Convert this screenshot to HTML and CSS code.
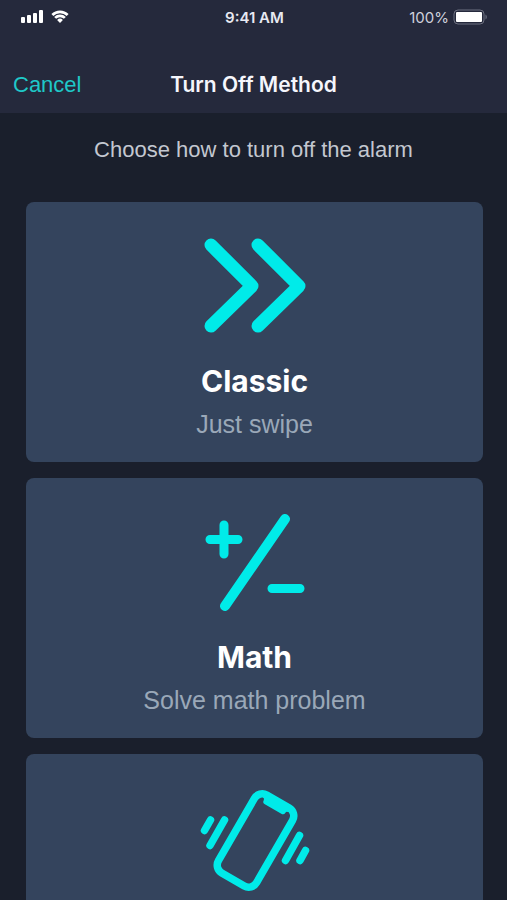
FILE: index.html
```html
<!DOCTYPE html>
<html lang="en">
  <head>
    <meta charset="UTF-8" />
    <meta name="viewport" content="width=device-width, initial-scale=1.0" />
    <title>Turn Off Method</title>
    <link rel="stylesheet" href="styles.css">
  </head>
  <body>
    <div class="screen">
      <header class="header">
        <div class="status">
          <div class="status-left">
            <svg class="signal" width="22" height="14" viewBox="0 0 22 14" aria-hidden="true">
              <rect x="0" y="7" width="4" height="6" rx="1" />
              <rect x="6" y="5" width="4" height="8" rx="1" />
              <rect x="12" y="3" width="4" height="10" rx="1" />
              <rect x="18" y="0" width="4" height="13" rx="1" />
            </svg>
            <svg class="wifi" width="18" height="14" viewBox="0 0 20 14" aria-hidden="true">
              <path d="M1.5 4.8a12 12 0 0 1 17 0M4.6 8a7.6 7.6 0 0 1 10.8 0" />
              <path class="wifi-dot" d="M6.8 10.3a4.6 4.6 0 0 1 6.4 0L10 13.6z" />
            </svg>
          </div>
          <span class="time">9:41 AM</span>
          <div class="status-right">
            <span>100%</span>
            <svg width="35" height="16" viewBox="0 0 35 16" aria-hidden="true">
              <rect class="battery-case" x="1" y="1" width="30" height="14" rx="4" />
              <rect class="battery-level" x="3" y="3" width="26" height="10" rx="1" />
              <path class="battery-tip" d="M32.5 5.5a3 3 0 0 1 0 5z" />
            </svg>
          </div>
        </div>
        <nav class="navbar">
          <a class="cancel" href="#">Cancel</a>
          <h1>Turn Off Method</h1>
        </nav>
      </header>

      <main class="content">
        <p class="hint">Choose how to turn off the alarm</p>

        <div class="methods">
          <button class="method" type="button">
            <svg class="icon" viewBox="0 0 110 104" stroke-width="13" aria-hidden="true">
              <path d="M11 11l41 41-41 40M58 11l41 41-41 40" />
            </svg>
            <span class="method-name">Classic</span>
            <span class="method-text">Just swipe</span>
          </button>

          <button class="method" type="button">
            <svg class="icon" viewBox="0 0 110 104" stroke-width="9" aria-hidden="true">
              <path d="M10 29.5h28M24 15v29M72 78.5h28" />
              <path d="M85 9L25 96" stroke-width="10" />
            </svg>
            <span class="method-name">Math</span>
            <span class="method-text">Solve math problem</span>
          </button>

          <button class="method" type="button" aria-label="Shake">
            <svg class="icon" viewBox="0 0 110 104" stroke-width="7.5" aria-hidden="true">
              <g transform="translate(55.5 54.5) rotate(30)">
                <rect x="-22" y="-45" width="44" height="90" rx="9" />
                <path class="notch" d="M-15-44h29v3q-2 0-2 2 0 3-3 3h-19q-3 0-3-3 0-2-2-2z" />
              </g>
              <path d="M24.5 34L10 59.5M10.5 34L4.5 44.5M99.5 49.500L85.5 74.5M105.5 64.5L100 74.5" />
            </svg>
          </button>
        </div>
      </main>
    </div>
  </body>
</html>
```

FILE: styles.css
```css
* {
  margin: 0;
  padding: 0;
  box-sizing: border-box;
}

body {
  background-color: #1a1f2c;
  font-family: "Liberation Sans", Arial, sans-serif;
  color: #fff;
}

.screen {
  height: 100vh;
  overflow: hidden;
}

.header {
  background-color: #25293c;
}

.status {
  display: grid;
  grid-template-columns: 1fr auto 1fr;
  align-items: center;
  height: 34px;
  padding: 0 19px 0 21px;
  font-family: Inter, sans-serif;
  font-size: 15px;
  color: #e8e9f2;
}

.status-left,
.status-right {
  display: flex;
  align-items: center;
  gap: 8px;
}

.status-right {
  justify-content: flex-end;
  gap: 4px;
  color: #cfd1dc;
}

.time {
  font-weight: 600;
}

.signal {
  fill: #fff;
}

.wifi {
  fill: none;
  stroke: #fff;
  stroke-width: 3;
}

.wifi-dot {
  fill: #fff;
  stroke: none;
}

.battery-case {
  fill: none;
  stroke: #6d7080;
}

.battery-level {
  fill: #fff;
}

.battery-tip {
  fill: #6d7080;
}

.navbar {
  display: grid;
  grid-template-columns: 1fr auto 1fr;
  align-items: baseline;
  height: 79px;
  padding: 37px 13px 0;
}

.cancel {
  font-size: 22px;
  line-height: 28px;
  color: #1fc8c8;
  text-decoration: none;
}

h1 {
  font-family: Inter, sans-serif;
  font-size: 21px;
  line-height: 28px;
  font-weight: 600;
  color: #f5f6fc;
}

.hint {
  padding: 23px 0 38px;
  font-size: 22px;
  line-height: 28px;
  text-align: center;
  color: #c3c7d0;
}

.methods {
  display: flex;
  flex-direction: column;
  gap: 16px;
  padding: 0 24px 0 26px;
}

.method {
  display: flex;
  flex-direction: column;
  align-items: center;
  flex-shrink: 0;
  min-height: 260px;
  padding: 32px 16px 20px;
  border: 0;
  border-radius: 8px;
  background-color: #34445d;
  font-family: inherit;
  color: #fff;
  cursor: pointer;
}

.icon {
  width: 110px;
  height: 104px;
  overflow: visible;
  fill: none;
  stroke: #00ebe9;
  stroke-linecap: round;
  stroke-linejoin: round;
}

.notch {
  fill: #00ebe9;
  stroke: none;
}

.method-name {
  margin-top: 24px;
  font-family: Inter, sans-serif;
  font-size: 30px;
  line-height: 38px;
  font-weight: 700;
}

.method-text {
  margin-top: 8px;
  font-size: 25px;
  line-height: 32px;
  color: #9aa8b8;
}
```
